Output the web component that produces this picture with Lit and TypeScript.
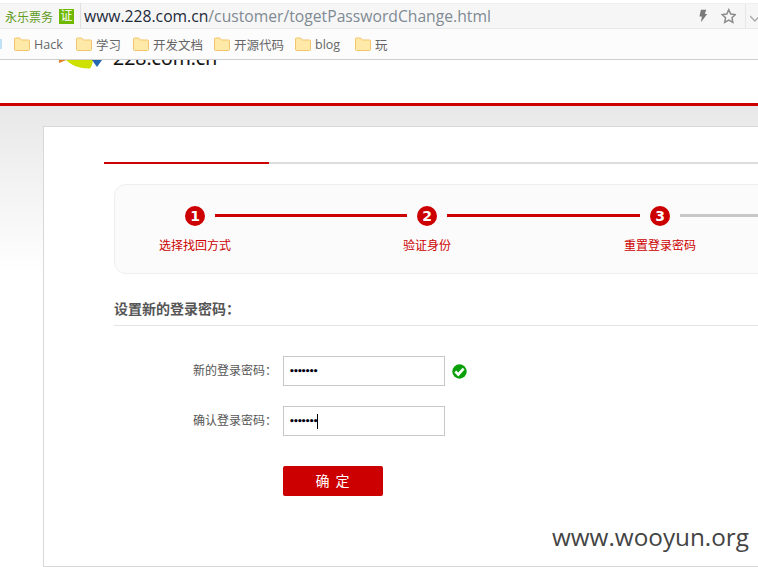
import { LitElement, html, css, svg } from "lit";
import { customElement } from "lit/decorators.js";

const folder = svg`<svg class="folder" width="16" height="14" viewBox="0 0 16 14"><path d="M1.5 1h4.2l1.6 2h7.2a1 1 0 0 1 1 1v8.5a1 1 0 0 1-1 1h-13a1 1 0 0 1-1-1V2a1 1 0 0 1 1-1z" fill="#ffe9a8" stroke="#f2c56b"/></svg>`;

@customElement("app-root")
export class AppRoot extends LitElement {
  static styles = css`
    :host { display: block; width: 758px; height: 567px; overflow: hidden; background: #fff; font-family: "Liberation Sans", "Noto Sans CJK SC", sans-serif; font-size: 12px; position: relative; }
    .addr { height: 26px; margin-top: 3px; background: #f6f6f6; border-top: 1px solid #f0f0f0; border-bottom: 1px solid #e8e8e8; display: flex; align-items: center; box-sizing: border-box; padding-left: 5px; }
    .site { color: #5f9a1c; font-size: 12px; width: 54px; white-space: nowrap; }
    .cert { width: 15px; height: 15px; background: #6fb800; color: #fff; font-size: 12px; line-height: 15px; text-align: center; }
    .sep { width: 1px; height: 26px; background: #e0e0e0; margin: 0 3px 0 6px; }
    .url { font-family: "Open Sans", sans-serif; font-size: 15.7px; color: #7f8a93; flex: 1; white-space: nowrap; }
    .url b { font-weight: 400; color: #1d2a3a; }
    .acts { display: flex; align-items: center; flex: none; width: 60px; }
    .star { margin-left: 13px; }
    .vsep { width: 1px; height: 24px; background: #e6e6e6; margin-left: 9px; }
    .chev { margin-left: 4px; margin-top: 5px; }
    .bm { height: 31px; background: #fcfcfc; border-bottom: 1px solid #cfcfcf; display: flex; align-items: center; box-sizing: border-box; color: #555; }
    .sliver { width: 2px; height: 10px; background: #bfe0f5; margin-right: 12px; }
    .item { display: flex; align-items: center; gap: 4px; }
    .i1 { width: 62px; } .i2 { width: 57px; } .i3, .i4 { width: 81px; } .i5 { width: 60px; }
    .t { font-family: "Open Sans", "Noto Sans CJK SC", sans-serif; color: #666; font-size: 12.5px; }
    .head { height: 43px; overflow: hidden; display: flex; gap: 11px; padding-left: 57px; border-bottom: 3px solid #c00; }
    .brand { font-family: "Open Sans", sans-serif; font-size: 19.500px; color: #111; line-height: 24px; margin-top: -14px; -webkit-text-stroke: 0.2px #111; }
    .main { height: 462px; background: linear-gradient(#e8e8e8, #fff 170px); padding: 20px 0 0 43px; box-sizing: border-box; }
    .card { height: 441px; background: #fff; border: 1px solid #d8d8d8; border-right: 0; padding: 35px 0 0 60px; box-sizing: border-box; }
    .prog { height: 2px; background: #ddd; }
    .prog i { display: block; width: 165px; height: 2px; background: #c00; }
    .steps { margin: 20px 0 0 10px; height: 90px; width: 700px; box-sizing: border-box; border: 1px solid #eee; border-radius: 12px; background: #fbfbfb; padding-top: 21px; }
    .track { display: flex; align-items: center; gap: 10px; padding-left: 70px; height: 20px; }
    .dot { width: 20px; height: 20px; border-radius: 50%; background: #c00; color: #fff; font: bold 14px/20px "DejaVu Sans", sans-serif; text-align: center; flex: none; }
    .line { height: 3px; background: #c00; width: 192px; flex: none; margin-top: -1px; }
    .line.w { width: 193px; }
    .line.g { background: #c8c8c8; width: 120px; }
    .labels { display: flex; color: #c00; margin-top: 11px; line-height: 18px; padding-left: 44px; }
    .labels span { width: 72px; text-align: center; white-space: nowrap; }
    .labels .l2 { margin-left: 160px; }
    .labels .l3 { margin-left: 161px; }
    .title { margin: 26px 0 0 10px; height: 25px; border-bottom: 1px solid #e4e4e4; font-size: 14px; font-weight: bold; color: #555; line-height: 18px; }
    .row { display: flex; align-items: center; margin-top: 20px; height: 30px; }
    .row.first { margin-top: 30px; }
    .row label { width: 179px; text-align: right; color: #555; padding: 0 6px 4px 0; box-sizing: border-box; }
    .input { width: 162px; height: 30px; box-sizing: border-box; border: 1px solid #c8c8c8; display: flex; align-items: center; padding-left: 5px; color: #001; font: 700 9px/1 "DejaVu Sans", sans-serif; letter-spacing: -1.8px; background: #fff; }
    .caret { width: 1px; height: 15px; background: #000; }
    .ok { margin-left: 7px; }
    .btn { margin: 30px 0 0 179px; width: 100px; height: 30px; background: #c00; color: #fff; border-radius: 2px; text-align: center; line-height: 30px; font-size: 14px; letter-spacing: 1px; }
    .wm { position: absolute; right: 9px; top: 520px; font-family: "Open Sans", sans-serif; font-size: 24.300px; color: #444; }
  `;

  render() {
    return html`
      <div class="addr">
        <span class="site">永乐票务</span>
        <span class="cert">证</span>
        <i class="sep"></i>
        <div class="url"><b>www.228.com.cn</b>/customer/togetPasswordChange.html</div>
        <div class="acts">
          <svg width="10" height="14" viewBox="0 0 10 14"><path d="M3 0.500h5.500L7 5h2.500L3 13.500 4 7.500H1.500z" fill="#7a7a7a"/></svg>
          <svg class="star" width="16" height="16" viewBox="0 0 16 16"><path d="M8 1.500l2 4.400 4.800.6-3.500 3.300.9 4.700L8 12.200l-4.200 2.300.9-4.700L1.200 6.500 6 5.900z" fill="none" stroke="#8a8a8a" stroke-width="1.500"/></svg>
          <i class="vsep"></i>
          <svg class="chev" width="8" height="8" viewBox="0 0 8 8"><path d="M0 1l5 5 5-5" fill="none" stroke="#aaa" stroke-width="1.500"/></svg>
        </div>
      </div>
      <div class="bm">
        <i class="sliver"></i>
        <span class="item i1">${folder}<span class="t">Hack</span></span>
        <span class="item i2">${folder}<span class="t">学习</span></span>
        <span class="item i3">${folder}<span class="t">开发文档</span></span>
        <span class="item i4">${folder}<span class="t">开源代码</span></span>
        <span class="item i5">${folder}<span class="t">blog</span></span>
        <span class="item">${folder}<span class="t">玩</span></span>
      </div>
      <div class="head">
        <svg width="45" height="10" viewBox="0 0 45 10"><path d="M2 2.500L9 0H2z" fill="#e8802a"/><path d="M2 0h7l-7 3z" fill="#e8802a"/><path d="M9 0h27c-.5 4-1.500 7-3 8.500C22 9 14 5 9 0z" fill="#cde000"/><path d="M35 0h10l-5 7z" fill="#2567b0"/></svg>
        <div class="brand">228.com.cn</div>
      </div>
      <div class="main">
        <div class="card">
          <div class="prog"><i></i></div>
          <div class="steps">
            <div class="track">
              <div class="dot">1</div><div class="line"></div>
              <div class="dot">2</div><div class="line w"></div>
              <div class="dot">3</div><div class="line g"></div>
            </div>
            <div class="labels"><span>选择找回方式</span><span class="l2">验证身份</span><span class="l3">重置登录密码</span></div>
          </div>
          <div class="title">设置新的登录密码：</div>
          <div class="row first"><label>新的登录密码：</label><div class="input">•••••••</div>
            <svg class="ok" width="15" height="15" viewBox="0 0 15 15"><circle cx="7.500" cy="7.500" r="7.200" fill="#0aa00a"/><path d="M3.300 7.500l3 3 5.300-5.800" fill="none" stroke="#fff" stroke-width="2.600"/></svg></div>
          <div class="row"><label>确认登录密码：</label><div class="input">•••••••<i class="caret"></i></div></div>
          <div class="btn">确 定</div>
        </div>
      </div>
      <div class="wm">www.wooyun.org</div>
    `;
  }
}
